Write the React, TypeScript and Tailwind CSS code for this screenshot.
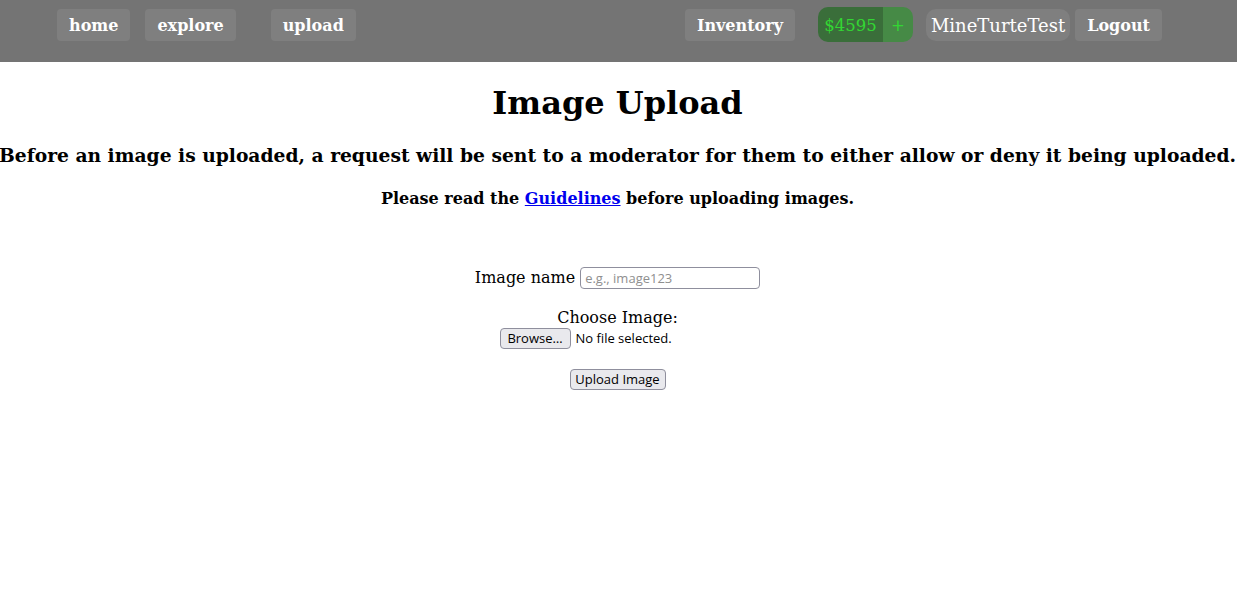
import React from 'react';

const serif = { fontFamily: '"DejaVu Serif", serif' };
const ui = { fontFamily: '"Open Sans", sans-serif' };

function NavButton({ label }: { label: string }) {
  return (
    <button className="h-8 px-3 pt-[2px] rounded bg-[#7f7f7f] text-white font-bold text-[16px] leading-none">
      {label}
    </button>
  );
}

export default function App() {
  return (
    <div className="min-h-screen bg-white text-black" style={serif}>
      {/* Top bar */}
      <header className="h-[62px] bg-[#747474] flex items-start pt-[9px] pl-[57px]">
        <div className="flex gap-[15px]">
          <NavButton label="home" />
          <NavButton label="explore" />
        </div>
        <div className="ml-[35px]">
          <NavButton label="upload" />
        </div>
        <div className="ml-auto mr-[75px] flex items-start">
          <NavButton label="Inventory" />
          {/* balance pill with top-up button */}
          <div className="ml-[23px] -mt-[2px] h-[35px] flex rounded-[10px] overflow-hidden text-[16.5px] text-[#33d633]">
            <span className="w-[65px] pt-[3px] flex items-center justify-center bg-[#3a6e3a]">$4595</span>
            <span className="w-[30px] pt-[3px] flex items-center justify-center bg-[#468a46]">+</span>
          </div>
          <span className="ml-[13px] h-8 px-[5px] flex items-center rounded-[10px] bg-[#7f7f7f] text-white text-[18px]">
            MineTurteTest
          </span>
          <div className="ml-[5px]">
            <NavButton label="Logout" />
          </div>
        </div>
      </header>

      <main className="flex flex-col items-center pr-[2px]">
        <h1 className="mt-[21px] text-[32px] font-bold leading-[40px]">Image Upload</h1>
        <h3 className="mt-[18px] text-[18.7px] font-bold whitespace-nowrap">
          Before an image is uploaded, a request will be sent to a moderator for them to either allow or deny it being uploaded.
        </h3>
        <h4 className="mt-[18px] text-[16px] font-bold">
          Please read the{' '}
          <a href="#" className="text-[#0000ee] underline">Guidelines</a>{' '}
          before uploading images.
        </h4>

        <form className="mt-[55px] flex flex-col items-center">
          <label className="flex items-center gap-[5px] text-[16px]">
            Image name
            <input
              type="text"
              placeholder="e.g., image123"
              className="w-[180px] h-[22px] border border-[#8f8f9d] rounded-sm px-1 text-[13px] placeholder:text-[#8f8f8f]"
              style={ui}
            />
          </label>
          <label className="mt-[18px] text-[16px] leading-[20px]">Choose Image:</label>
          <div className="w-[236px] flex items-center gap-[5px] text-[13px]" style={ui}>
            <span className="h-[21px] w-[71px] flex items-center justify-center border border-[#8f8f9d] rounded bg-[#e9e9ed]">
              Browse…
            </span>
            <span>No file selected.</span>
          </div>
          <button
            type="button"
            className="mt-[20px] h-[21px] w-[96px] border border-[#8f8f9d] rounded bg-[#e9e9ed] text-[13px]"
            style={ui}
          >
            Upload Image
          </button>
        </form>
      </main>
    </div>
  );
}
